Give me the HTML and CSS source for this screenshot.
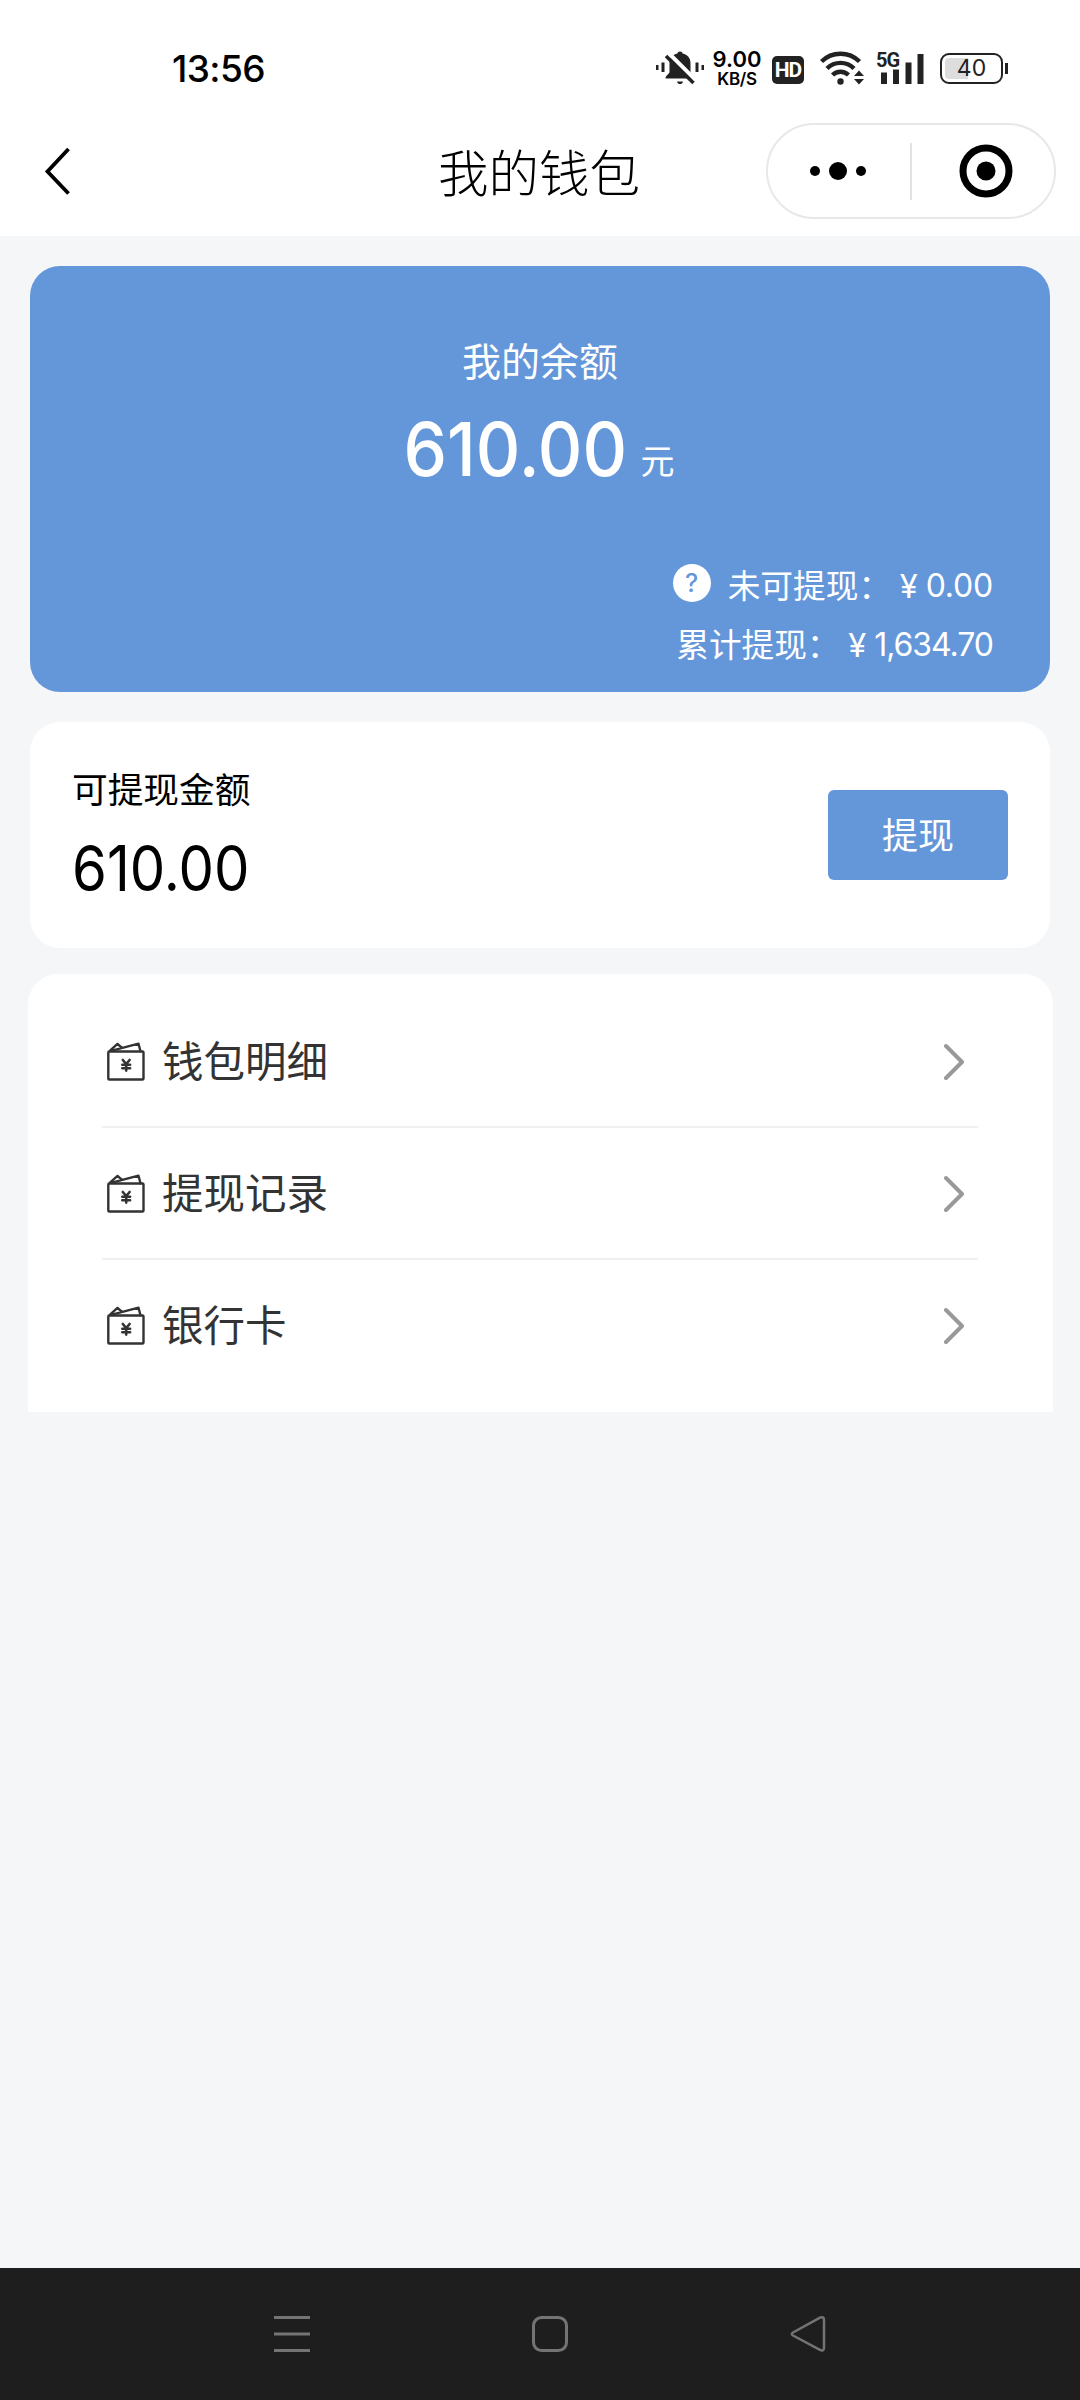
FILE: index.html
```
<!DOCTYPE html>
<html lang="zh-CN">
<head>
<meta charset="utf-8">
<title>我的钱包</title>
<link rel="stylesheet" href="styles.css">
</head>
<body>
<svg class="defs" width="0" height="0">
  <symbol id="wallet" viewBox="0 0 38 40">
    <g fill="none" stroke="#333" stroke-width="2.4" stroke-linejoin="round" stroke-linecap="round">
      <rect x="1.3" y="9.500" width="35.2" height="28" rx="1"/>
      <path d="M3 8.700 10.500 1.900l4.500 4M5 8.700 31.500 1.700l2 7.500"/>
      <path d="M15.800 18l3.400 4 3.400-4M15.300 22.800h7.800M15.300 26.200h7.800M19.200 22v6.600" stroke-width="2.600"/>
    </g>
  </symbol>
  <symbol id="chevron" viewBox="0 0 22 38">
    <path d="M2 3l16 16L2 35" fill="none" stroke="#999" stroke-width="4" stroke-linecap="round" stroke-linejoin="round"/>
  </symbol>
</svg>
<header class="top">
  <div class="status">
    <span class="time">13:56</span>
    <div class="indicators">
      <svg class="bell" width="48" height="36" viewBox="0 0 48 36">
        <g fill="#222"><path d="M24 1.500c1.500 0 2.400.8 2.600 2 5 1.300 7.900 4.500 7.900 9.500v9c0 2 4 3 4 6.500H9.500c0-3.500 4-4.500 4-6.500v-9c0-5 2.900-8.200 7.900-9.500.2-1.200 1.100-2 2.600-2z"/>
        <path d="M21 31.500h6c-.5 2-1.500 2.500-3 2.500s-2.500-.5-3-2.500z"/><path d="M0 15h2.500v5H0zM5.500 12.500H8.500v9.500H5.500zM39.500 12.500h3v9.500h-3zM45.500 15H48v5h-2.500z"/></g>
        <path d="M13 3.500l26 26" stroke="#fff" stroke-width="4"/><path d="M10 6l27.500 27" stroke="#222" stroke-width="3.500"/>
      </svg>
      <div class="speed"><b>9.00</b><span>KB/S</span></div>
      <span class="hd">HD</span>
      <svg class="wifi" width="46" height="36" viewBox="0 0 46 36">
        <g fill="none" stroke="#222" stroke-width="4.400"><path d="M1.500 11.500a27 27 0 0 1 38 0"/><path d="M7 18.500a19 19 0 0 1 27 0"/><path d="M12.500 25a11.500 11.500 0 0 1 16 0"/></g>
        <circle cx="20.500" cy="31.500" r="3.200" fill="#222"/>
        <path d="M34 26l5-5.500 5 5.500zM34 29h10l-5 5.500z" fill="#222"/>
      </svg>
      <div class="signal"><span>5G</span>
        <svg width="46" height="36" viewBox="0 0 46 36"><path d="M3 22.500h6V34H3zM15 19.500h6V34h-6zM27.500 12.500h6V34h-6zM39.500 4h6v30h-6z" fill="#222"/></svg>
      </div>
      <div class="battery"><span>40</span></div>
    </div>
  </div>
  <nav class="bar">
    <svg class="back" width="28" height="50" viewBox="0 0 28 50"><path d="M24.500 3 3.500 25.500l21 22" fill="none" stroke="#000" stroke-width="3.800"/></svg>
    <h1>我的钱包</h1>
    <div class="capsule">
      <svg width="50" height="20" viewBox="0 0 50 20"><circle cx="5" cy="10" r="5"/><circle cx="28" cy="10" r="9"/><circle cx="51" cy="10" r="5"/></svg>
      <i></i>
      <svg class="ring" width="54" height="54" viewBox="0 0 54 54"><circle cx="27" cy="27" r="23" fill="none" stroke="#000" stroke-width="7"/><circle cx="27" cy="27" r="9.500"/></svg>
    </div>
  </nav>
</header>
<main>
  <section class="balance">
    <p class="caption">我的余额</p>
    <p class="amount"><b>610.00</b><span>元</span></p>
    <div class="details">
      <p><i class="help">?</i><span class="key">未可提现：</span><span class="yen">¥</span><span class="num">0.00</span></p>
      <p><span class="key">累计提现：</span><span class="yen">¥</span><span class="num total">1,634.70</span></p>
    </div>
  </section>
  <section class="available">
    <div><p class="label">可提现金额</p><p class="sum">610.00</p></div>
    <button>提现</button>
  </section>
  <section class="menu">
    <a><svg class="wallet"><use href="#wallet"/></svg><span>钱包明细</span><svg class="chevron"><use href="#chevron"/></svg></a>
    <a><svg class="wallet"><use href="#wallet"/></svg><span>提现记录</span><svg class="chevron"><use href="#chevron"/></svg></a>
    <a><svg class="wallet"><use href="#wallet"/></svg><span>银行卡</span><svg class="chevron"><use href="#chevron"/></svg></a>
  </section>
</main>
<footer>
  <svg width="36" height="38" viewBox="0 0 36 38"><path d="M0 2.500h36M0 19h36M0 35.500h36" stroke="#747474" stroke-width="3"/></svg>
  <svg width="36" height="38" viewBox="0 0 36 38"><rect x="1.500" y="2.500" width="33" height="33" rx="8" fill="none" stroke="#747474" stroke-width="3"/></svg>
  <svg width="36" height="38" viewBox="0 0 36 38"><path d="M3 17.500 29.500 2.800Q34 1 34 5v28q0 4-4.500 1.700L3 20.500Q.5 19 3 17.500z" fill="none" stroke="#747474" stroke-width="2.500"/></svg>
</footer>
</body>
</html>
```
FILE: styles.css
```
* { box-sizing: border-box; margin: 0; padding: 0; }
body {
  width: 1080px; height: 2400px;
  display: flex; flex-direction: column;
  background: #f4f6f8; color: #000;
  font-family: Inter, "Noto Sans CJK SC", sans-serif;
  overflow: hidden;
}
.defs { display: block; position: absolute; }
i { font-style: normal; }
b { font-weight: 500; }
.top { height: 236px; background: #fff; }
.status { height: 108px; padding: 30px 77px 0 172px; display: flex; justify-content: space-between; }
.time { font-size: 37px; line-height: 78px; height: 78px; font-weight: 500; letter-spacing: -.6px; }
.indicators { display: flex; height: 36px; margin-top: 20px; }
.bell { margin-left: -2px; }
.speed { width: 48px; margin-left: 9px; display: flex; flex-direction: column; align-items: center; white-space: nowrap; }
.speed b { font-size: 22px; line-height: 19px; height: 18px; font-weight: 600; letter-spacing: 0; }
.speed span { font-size: 17px; line-height: 18px; height: 18px; margin-top: 2px; font-weight: 600; letter-spacing: -.3px; }
.hd { width: 32px; height: 28px; margin: 6px 0 0 11px; border-radius: 5px; background: #222; color: #fff; font: 700 21px/28px Roboto, sans-serif; text-align: center; letter-spacing: -1px; }
.wifi { margin-left: 16px; }
.signal { position: relative; width: 46px; margin-left: 12px; }
.signal span { position: absolute; left: -2px; top: 0; font: 700 20px/20px Roboto, sans-serif; letter-spacing: -1px; color: #222; }
.battery { position: relative; width: 63px; height: 31px; margin: 3px 0 0 16px; border: 2.500px solid #222; border-radius: 9px; background: linear-gradient(90deg, #ddd 0 23px, #fff 23px); background-origin: content-box; background-clip: content-box; padding: 3px; text-align: center; font-size: 23px; line-height: 21px; color: #222; }
.battery::after { content: ""; position: absolute; right: -7px; top: 8px; width: 3px; height: 11px; background: #222; }
.bar { position: relative; height: 128px; padding: 15px 24px 0 44px; display: flex; justify-content: space-between; }
.back { margin-top: 23px; }
h1 { font-size: 50.500px; line-height: 96px; height: 96px; font-weight: 300; margin: 3px 0 0 240px; }
.capsule { width: 290px; height: 96px; border: 2px solid #e8e8e8; border-radius: 48px; display: flex; align-items: center; padding-left: 42px; }
.capsule svg { overflow: visible; }
.capsule i { width: 2px; height: 57px; background: #e2e2e2; margin-left: 50px; }
.ring { margin-left: 46.500px; }
main { flex: 1; padding: 30px 27px 0 28px; }
.balance { height: 426px; margin: 0 3px 0 2px; background: #6496da; color: #fff; border-radius: 30px; padding-top: 67px; }
.caption { text-align: center; font-size: 39px; line-height: 58px; }
.amount { display: flex; justify-content: center; align-items: baseline; line-height: 90px; margin-top: 13px; }
.amount b { font-size: 74px; transform: scaleX(.935); transform-origin: right; margin-left: -17px; }
.amount span { font-size: 34px; line-height: 60px; margin-left: 13px; position: relative; top: -2px; }
.details { margin-top: 62px; padding-right: 57px; font-size: 32.700px; line-height: 60px; white-space: nowrap; }
.details p { display: flex; justify-content: flex-end; height: 59px; }
.key { width: 164px; }
.yen { margin-left: 8px; width: 26px; }
.num { font-size: 32px; letter-spacing: -.2px; }
.total { letter-spacing: -1.050px; }
.help { width: 38px; height: 38px; margin: 8px 17px 0 0; border-radius: 50%; background: #fff; color: #6496da; font-size: 25px; line-height: 38px; font-weight: 500; text-align: center; }
.available { height: 226px; margin: 30px 3px 0 2px; background: #fff; border-radius: 30px; padding: 0 42px; display: flex; justify-content: space-between; align-items: center; }
.label { font-size: 35.700px; line-height: 52px; padding-top: 2px; }
.sum { width: 200px; font-size: 63px; line-height: 80px; margin: 12px -20px 0 0; font-weight: 400; transform: scaleX(.893); transform-origin: left; }
.available button { width: 180px; height: 90px; border: 0; border-radius: 6px; background: #6496da; color: #fff; font: 36px/50px "Noto Sans CJK SC", sans-serif; padding-bottom: 4px; }
.menu { height: 438px; margin-top: 26px; background: #fff; border-radius: 30px 30px 0 0; padding: 22px 75px 0 74px; }
.menu a { display: flex; align-items: center; height: 132px; padding: 2px 12px 1px 5px; border-bottom: 2px solid #f0f0f0; color: #333; font-size: 41.500px; }
.menu a:last-child { border: 0; padding-bottom: 3px; }
.wallet { width: 38px; height: 40px; }
.menu span { flex: 1; margin-left: 17px; line-height: 60px; padding-top: 1px; }
.chevron { width: 22px; height: 38px; }
footer { height: 132px; background: #1e1e1e; display: flex; justify-content: space-between; align-items: center; padding: 0 254px 0 274px; }
```
